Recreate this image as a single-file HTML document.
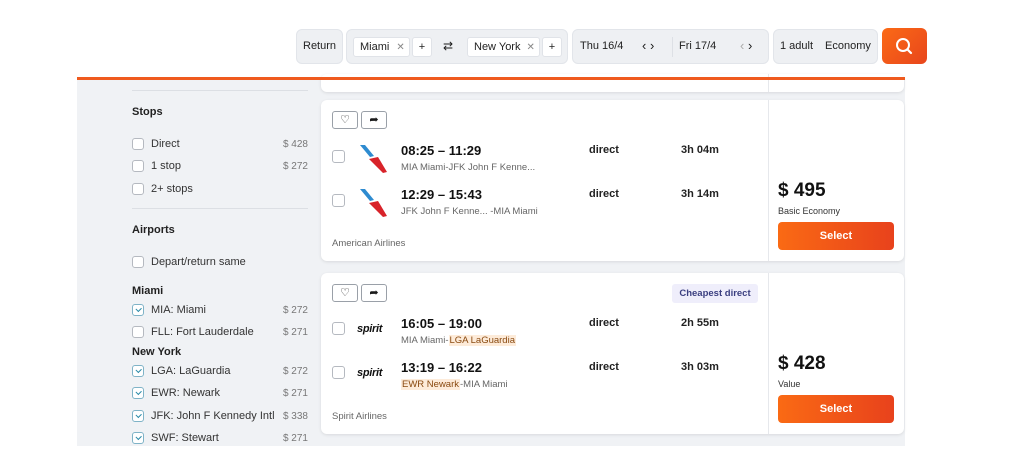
<!DOCTYPE html>
<html><head><meta charset="utf-8"><style>
*{box-sizing:border-box;margin:0;padding:0}
body{width:1026px;height:466px;background:#fff;font-family:"Liberation Sans",sans-serif;color:#1a1a1a;position:relative;overflow:hidden}
.a{position:absolute}
.box{position:absolute;background:#eef0f3;border:1px solid #e2e5ea;border-radius:6px}
.chip{position:absolute;background:#fff;border:1px solid #e0e3e8;border-radius:3px;font-size:11px;line-height:18px;padding-left:6px;color:#222}
.t{font-size:11px;color:#222}
.cb{position:absolute;width:12px;height:12px;border:1px solid #b5b9c0;border-radius:3px;background:#fff}
.cbc{border-color:#7fb3c7}
.cbc::after{content:"";position:absolute;left:3px;top:2px;width:4px;height:2.5px;border-left:1.3px solid #2a8aa8;border-bottom:1.3px solid #2a8aa8;transform:rotate(-45deg)}
.sl{position:absolute;left:151px;font-size:11px;color:#333}
.sp{position:absolute;right:718px;font-size:10px;color:#777}
.h{position:absolute;left:132px;font-size:11px;font-weight:bold;color:#222}
.card{position:absolute;left:321px;width:583px;background:#fff;border-radius:6px;box-shadow:0 1px 3px rgba(0,0,0,.1)}
.vd{position:absolute;left:447px;top:0;bottom:0;width:1px;background:#e6e8ec}
.ib{position:absolute;width:26px;height:18px;border:1px solid #9aa0a8;border-radius:3px;background:#fff;font-size:11px;text-align:center;line-height:16px}
.tm{position:absolute;font-size:13px;font-weight:bold;color:#111}
.sub{position:absolute;font-size:9.5px;color:#666}
.dr{position:absolute;font-size:11px;font-weight:bold;color:#222}
.pr{position:absolute;left:457px;font-size:19px;font-weight:bold;color:#111}
.pl{position:absolute;left:457px;font-size:9px;color:#333}
.sel{position:absolute;left:457px;width:116px;height:28px;border-radius:4px;background:linear-gradient(90deg,#fa6a14,#e8421c);color:#fff;font-size:11px;font-weight:bold;text-align:center;line-height:28px}
.hl{background:#fdebd9;color:#8a4a10;padding:0 1px}
.sp2{position:absolute;font-size:11px;font-weight:bold;font-style:italic;color:#111;letter-spacing:-.3px}
</style></head><body>
<div class="box" style="left:296px;top:29px;width:47px;height:35px"><span class="a t" style="left:6px;top:10px">Return</span></div>
<div class="box" style="left:346px;top:29px;width:222px;height:35px">
<div class="chip" style="left:6px;top:7px;width:57px;height:20px">Miami <span style="color:#888;font-size:10px;margin-left:4px">✕</span></div>
<div class="chip" style="left:65px;top:7px;width:20px;height:20px;padding:0;text-align:center">+</div>
<span class="a" style="left:96px;top:9px;font-size:12px">⇄</span>
<div class="chip" style="left:120px;top:7px;width:73px;height:20px">New York <span style="color:#888;font-size:10px;margin-left:3px">✕</span></div>
<div class="chip" style="left:195px;top:7px;width:20px;height:20px;padding:0;text-align:center">+</div>
</div>
<div class="box" style="left:572px;top:29px;width:197px;height:35px">
<span class="a t" style="left:7px;top:10px">Thu 16/4</span>
<span class="a" style="left:69px;top:8px;font-size:13px">‹ ›</span>
<div class="a" style="left:99px;top:7px;width:1px;height:20px;background:#dde0e5"></div>
<span class="a t" style="left:106px;top:10px">Fri 17/4</span>
<span class="a" style="left:167px;top:8px;font-size:13px"><span style="color:#aaa">‹</span> ›</span>
</div>
<div class="box" style="left:773px;top:29px;width:105px;height:35px"><span class="a t" style="left:6px;top:10px">1 adult</span><span class="a t" style="left:51px;top:10px">Economy</span></div>
<div class="a" style="left:882px;top:28px;width:45px;height:36px;border-radius:6px;background:linear-gradient(135deg,#fb6a16,#e8461c)">
<svg width="45" height="36"><circle cx="21" cy="17" r="6" fill="none" stroke="#fff" stroke-width="2"/><line x1="25.5" y1="21.5" x2="29" y2="25" stroke="#fff" stroke-width="2.2" stroke-linecap="round"/></svg></div>
<div class="a" style="left:77px;top:80px;width:828px;height:366px;background:#f0f2f5"></div>
<div class="card" style="top:74px;height:18px"><div class="vd"></div></div>
<div class="a" style="left:77px;top:77px;width:828px;height:3px;background:#ef5a1e"></div>
<div class="a" style="left:132px;top:90px;width:176px;height:1px;background:#dcdfe4"></div>
<div class="h" style="top:106px">Stops</div>
<div class="cb" style="left:132px;top:138px"></div><div class="sl" style="top:138px">Direct</div><div class="sp" style="top:139px">$ 428</div>
<div class="cb" style="left:132px;top:160px"></div><div class="sl" style="top:160px">1 stop</div><div class="sp" style="top:161px">$ 272</div>
<div class="cb" style="left:132px;top:183px"></div><div class="sl" style="top:183px">2+ stops</div>
<div class="a" style="left:132px;top:208px;width:176px;height:1px;background:#dcdfe4"></div>
<div class="h" style="top:224px">Airports</div>
<div class="cb" style="left:132px;top:256px"></div><div class="sl" style="top:256px">Depart/return same</div>
<div class="h" style="top:285px">Miami</div>
<div class="cb cbc" style="left:132px;top:304px"></div><div class="sl" style="top:304px">MIA: Miami</div><div class="sp" style="top:305px">$ 272</div>
<div class="cb" style="left:132px;top:326px"></div><div class="sl" style="top:326px">FLL: Fort Lauderdale</div><div class="sp" style="top:327px">$ 271</div>
<div class="h" style="top:346px">New York</div>
<div class="cb cbc" style="left:132px;top:365px"></div><div class="sl" style="top:365px">LGA: LaGuardia</div><div class="sp" style="top:366px">$ 272</div>
<div class="cb cbc" style="left:132px;top:387px"></div><div class="sl" style="top:387px">EWR: Newark</div><div class="sp" style="top:388px">$ 271</div>
<div class="cb cbc" style="left:132px;top:410px"></div><div class="sl" style="top:410px">JFK: John F Kennedy Intl</div><div class="sp" style="top:411px">$ 338</div>
<div class="cb cbc" style="left:132px;top:432px"></div><div class="sl" style="top:432px">SWF: Stewart</div><div class="sp" style="top:433px">$ 271</div>

<div class="card" style="top:100px;height:161px"><div class="vd"></div>
<div class="ib" style="left:11px;top:11px">♡</div><div class="ib" style="left:40px;top:11px">➦</div>
<div class="cb" style="left:11px;top:50px;width:13px;height:13px"></div>
<svg class="a" style="left:37px;top:44px" width="32" height="30"><polygon points="2,1 7,1 16,12 12,13" fill="#2e8bd0"/><polygon points="11,15 20,13 29,28 25,29" fill="#d8232a"/></svg>
<div class="tm" style="left:80px;top:43px">08:25 – 11:29</div><div class="sub" style="left:80px;top:62px">MIA Miami-JFK John F Kenne...</div>
<div class="dr" style="left:268px;top:44px">direct</div><div class="dr" style="left:360px;top:44px">3h 04m</div>
<div class="cb" style="left:11px;top:94px;width:13px;height:13px"></div>
<svg class="a" style="left:37px;top:88px" width="32" height="30"><polygon points="2,1 7,1 16,12 12,13" fill="#2e8bd0"/><polygon points="11,15 20,13 29,28 25,29" fill="#d8232a"/></svg>
<div class="tm" style="left:80px;top:87px">12:29 – 15:43</div><div class="sub" style="left:80px;top:106px">JFK John F Kenne... -MIA Miami</div>
<div class="dr" style="left:268px;top:88px">direct</div><div class="dr" style="left:360px;top:88px">3h 14m</div>
<div class="sub" style="left:11px;top:138px">American Airlines</div>
<div class="pr" style="top:80px">$ 495</div><div class="pl" style="top:106px">Basic Economy</div>
<div class="sel" style="top:122px">Select</div>
</div>

<div class="card" style="top:273px;height:161px"><div class="vd"></div>
<div class="ib" style="left:11px;top:11px">♡</div><div class="ib" style="left:40px;top:11px">➦</div>
<div class="a" style="left:351px;top:11px;width:86px;height:19px;border-radius:3px;background:#efeefb;color:#3b3f80;font-size:9.5px;font-weight:bold;text-align:center;line-height:19px">Cheapest direct</div>
<div class="cb" style="left:11px;top:49px;width:13px;height:13px"></div>
<div class="sp2" style="left:36px;top:50px">spirit</div>
<div class="tm" style="left:80px;top:43px">16:05 – 19:00</div><div class="sub" style="left:80px;top:62px">MIA Miami-<span class="hl">LGA LaGuardia</span></div>
<div class="dr" style="left:268px;top:44px">direct</div><div class="dr" style="left:360px;top:44px">2h 55m</div>
<div class="cb" style="left:11px;top:93px;width:13px;height:13px"></div>
<div class="sp2" style="left:36px;top:94px">spirit</div>
<div class="tm" style="left:80px;top:87px">13:19 – 16:22</div><div class="sub" style="left:80px;top:106px"><span class="hl">EWR Newark</span>-MIA Miami</div>
<div class="dr" style="left:268px;top:88px">direct</div><div class="dr" style="left:360px;top:88px">3h 03m</div>
<div class="sub" style="left:11px;top:138px">Spirit Airlines</div>
<div class="pr" style="top:80px">$ 428</div><div class="pl" style="top:106px">Value</div>
<div class="sel" style="top:122px">Select</div>
</div>
</body></html>
